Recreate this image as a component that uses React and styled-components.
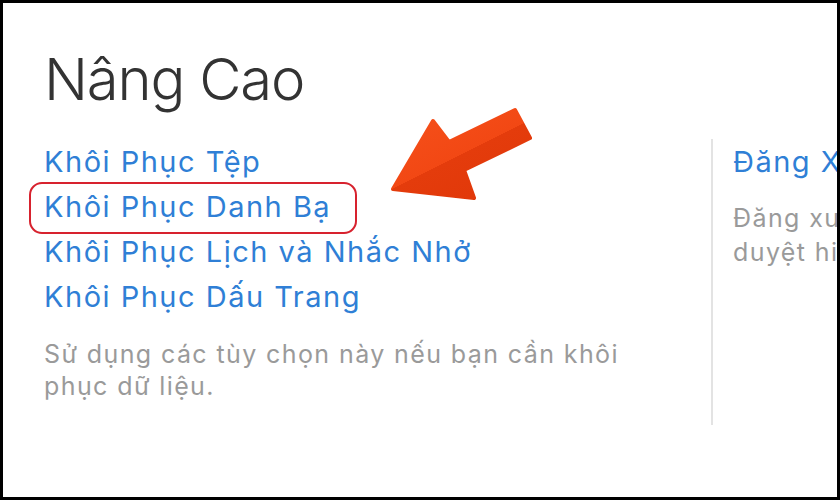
import React from 'react';
import styled, { createGlobalStyle } from 'styled-components';

const GlobalStyle = createGlobalStyle`
  html, body {
    margin: 0;
    padding: 0;
    background: #000;
  }
`;

const Frame = styled.div`
  box-sizing: border-box;
  width: 840px;
  height: 500px;
  border: 3px solid #000;
  background: #fff;
  overflow: hidden;
  position: relative;
  font-family: Inter, "Liberation Sans", sans-serif;
`;

const Content = styled.div`
  display: grid;
  grid-template-columns: 667px 22px auto;
  padding: 40px 0 0 41px;
`;

const Title = styled.h1`
  grid-column: 1 / -1;
  margin: 0 0 24px;
  font-size: 58px;
  font-weight: 300;
  line-height: 72px;
  color: #333;
  letter-spacing: -1.2px;
`;

const Column = styled.div`
  display: flex;
  flex-direction: column;
  white-space: nowrap;
`;

const Divider = styled.div`
  width: 2px;
  height: 286px;
  background: #e3e3e3;
`;

const LinkItem = styled.a`
  display: inline-block;
  align-self: flex-start;
  position: relative;
  font-size: 29px;
  line-height: 45px;
  color: #2f7fd6;
  text-decoration: none;
  letter-spacing: 1.5px;
`;

const Highlight = styled.span`
  position: absolute;
  left: -15px;
  right: -26px;
  top: -2px;
  bottom: -5px;
  border: 2px solid #d7222e;
  border-radius: 13px;
`;

const Note = styled.p`
  margin: 19px 0 0;
  font-size: 25px;
  line-height: 32px;
  color: #9a9a9a;
  letter-spacing: 1.4px;
  white-space: pre-line;
`;

const RightNote = styled(Note)`
  margin-top: 17px;
  line-height: 34px;
  white-space: pre;
`;

const ArrowWrap = styled.svg`
  position: absolute;
  left: 380px;
  top: 95px;
`;

const Arrow = () => (
  <ArrowWrap width="160" height="110" viewBox="380 95 160 110">
    <defs>
      <linearGradient id="arrowShade" gradientUnits="userSpaceOnUse" x1="437" y1="117" x2="473" y2="189">
        <stop offset="0" stopColor="#f44d18" />
        <stop offset="0.5" stopColor="#f24814" />
        <stop offset="0.5" stopColor="#e43c0c" />
        <stop offset="1" stopColor="#e2390a" />
      </linearGradient>
    </defs>
    <polygon
      points="390,186 430,118 446,139 512,107 527,135 461,167 471,195"
      fill="url(#arrowShade)"
      stroke="url(#arrowShade)"
      strokeWidth="4"
      strokeLinejoin="round"
    />
  </ArrowWrap>
);

const links = [
  { text: 'Khôi Phục Tệp' },
  { text: 'Khôi Phục Danh Bạ', marked: true },
  { text: 'Khôi Phục Lịch và Nhắc Nhở' },
  { text: 'Khôi Phục Dấu Trang' },
];

export default function App() {
  return (
    <>
      <GlobalStyle />
      <Frame>
        <Content>
          <Title>Nâng Cao</Title>
          <Column>
            {links.map((l) => (
              <LinkItem key={l.text} href="#">
                {l.text}
                {l.marked && <Highlight />}
              </LinkItem>
            ))}
            <Note>{'Sử dụng các tùy chọn này nếu bạn cần khôi\nphục dữ liệu.'}</Note>
          </Column>
          <Divider />
          <Column>
            <LinkItem href="#">Đăng Xuất Khỏi Tất Cả</LinkItem>
            <RightNote>{'Đăng xuất ngay khỏi tất cả\nduyệt hiện đang đăng nhập'}</RightNote>
          </Column>
        </Content>
        <Arrow />
      </Frame>
    </>
  );
}
